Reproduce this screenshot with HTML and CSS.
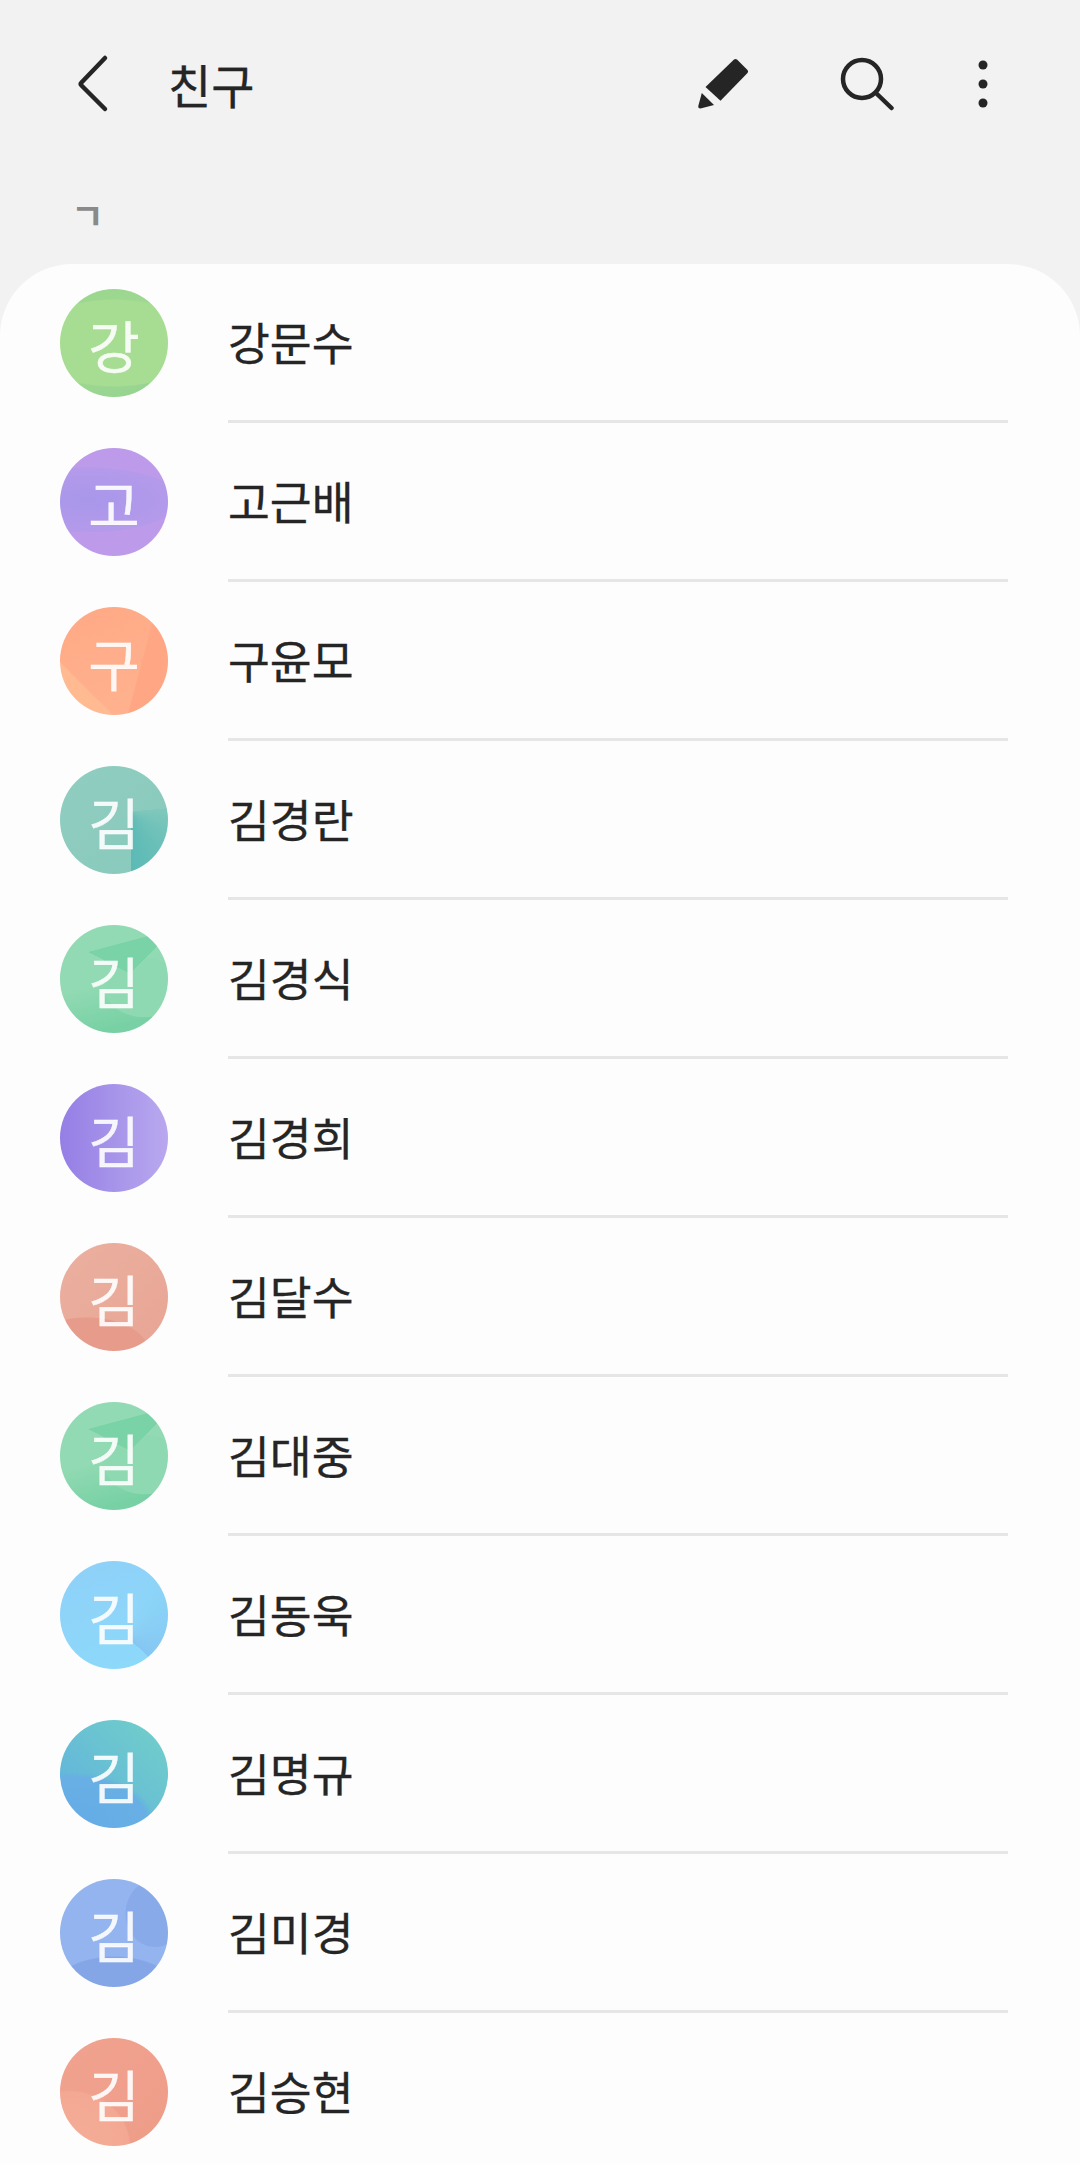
FILE: index.html
```html
<!DOCTYPE html>
<html lang="ko">
<head>
  <meta charset="UTF-8">
  <meta name="viewport" content="width=device-width, initial-scale=1.0">
  <title>친구</title>
  <link rel="stylesheet" href="styles.css">
</head>
<body>
  <header class="app-bar">
    <svg class="icon icon-back" width="36" height="60" viewBox="0 0 36 60">
      <path d="M30 4 L6.500 28.500 Q5 30 6.500 31.500 L30 55" />
    </svg>
    <h1 class="title">친구</h1>
    <svg class="icon icon-edit" width="56" height="56" viewBox="0 0 56 56">
      <path class="solid" d="M38 3.500 Q39.500 2.500 41 3.500 L51.500 14 Q52.800 15.500 51.500 17 L24.500 44.800 L9.500 31 Z" />
      <path class="solid" d="M5.800 37 L18 49 L4.500 52.500 Q2 52.500 2.300 50 Z" />
    </svg>
    <svg class="icon icon-search" width="56" height="56" viewBox="0 0 56 56">
      <circle cx="24" cy="23" r="19" />
      <path d="M39 38 L53.500 52" />
    </svg>
    <svg class="icon icon-more" width="18" height="56" viewBox="0 0 18 56">
      <circle class="solid" cx="9" cy="9" r="4.500" />
      <circle class="solid" cx="9" cy="28" r="4.500" />
      <circle class="solid" cx="9" cy="47" r="4.500" />
    </svg>
  </header>

  <div class="section-label">ㄱ</div>

  <ul class="friend-list">
    <li class="friend"><span class="avatar av-green">강</span><div class="friend-name">강문수</div></li>
    <li class="friend"><span class="avatar av-purple">고</span><div class="friend-name">고근배</div></li>
    <li class="friend"><span class="avatar av-orange">구</span><div class="friend-name">구윤모</div></li>
    <li class="friend"><span class="avatar av-teal">김</span><div class="friend-name">김경란</div></li>
    <li class="friend"><span class="avatar av-mint">김</span><div class="friend-name">김경식</div></li>
    <li class="friend"><span class="avatar av-violet">김</span><div class="friend-name">김경희</div></li>
    <li class="friend"><span class="avatar av-salmon">김</span><div class="friend-name">김달수</div></li>
    <li class="friend"><span class="avatar av-mint">김</span><div class="friend-name">김대중</div></li>
    <li class="friend"><span class="avatar av-sky">김</span><div class="friend-name">김동욱</div></li>
    <li class="friend"><span class="avatar av-azure">김</span><div class="friend-name">김명규</div></li>
    <li class="friend"><span class="avatar av-periwinkle">김</span><div class="friend-name">김미경</div></li>
    <li class="friend"><span class="avatar av-coral">김</span><div class="friend-name">김승현</div></li>
  </ul>
</body>
</html>
```

FILE: styles.css
```css
html, body {
  height: 100%;
}

body {
  margin: 0;
  height: 2164px;
  overflow: hidden;
  background: #f2f2f2;
  color: #252525;
  font-family: "Noto Sans CJK KR", "Noto Sans", sans-serif;
}

/* top bar */
.app-bar {
  display: flex;
  align-items: center;
  height: 168px;
  padding-left: 75px;
}

.title {
  margin: 0 0 0 57px;
  flex-grow: 1;
  font-size: 47px;
  font-weight: 400;
  line-height: 60px;
  -webkit-text-stroke: 0.3px #252525;
}

.icon {
  flex-shrink: 0;
  fill: none;
  stroke: #252525;
  stroke-width: 4.5;
  stroke-linecap: round;
  stroke-linejoin: round;
}

.icon .solid {
  fill: #252525;
  stroke: none;
}

.icon-edit {
  margin-right: 86px;
}

.icon-search {
  margin-right: 80px;
}

.icon-more {
  margin-right: 88px;
}

/* index letter */
.section-label {
  height: 96px;
  padding-left: 71px;
  color: #8a8a8a;
  font-size: 36px;
  font-weight: 700;
  line-height: 92px;
}

/* list */
.friend-list {
  margin: 0;
  padding: 0;
  list-style: none;
  background: #fdfdfd;
  border-radius: 72px 72px 0 0;
}

.friend {
  display: flex;
  align-items: flex-start;
  padding: 0 72px 0 60px;
}

.friend-name {
  flex-grow: 1;
  height: 156px;
  margin-left: 60px;
  border-bottom: 3px solid #e6e6e6;
  font-size: 45.500px;
  line-height: 154px;
  -webkit-text-stroke: 0.3px #252525;
}

.avatar {
  flex-shrink: 0;
  width: 108px;
  height: 108px;
  margin-top: 25px;
  border-radius: 50%;
  color: rgba(255, 255, 255, 0.9);
  font-size: 56px;
  line-height: 110px;
  text-align: center;
  -webkit-text-stroke: 0.4px rgba(255, 255, 255, 0.9);
}

/* avatar colours, each with a few soft facets */
.av-green {
  background:
    radial-gradient(ellipse 90px 44px at 50% 50%, #a7dd92 97%, transparent 100%),
    linear-gradient(160deg, #99d690, #a3da90 50%, #92d391);
}

.av-purple {
  background:
    radial-gradient(ellipse 115px 40px at 25% 48%, #a897ea, #b59aea 80%, transparent 82%),
    #bd9aea;
}

.av-orange {
  background:
    linear-gradient(45deg, #ffba92 24%, transparent 25%),
    linear-gradient(105deg, transparent 70%, #ffa684 71%),
    linear-gradient(160deg, #ffa986, #ffb28f);
}

.av-teal {
  background:
    conic-gradient(from 85deg at 66% 42%, #80c8bc 0, #5cbab6 95deg, transparent 95.500deg),
    linear-gradient(135deg, #90cdc0, #88cabc);
}

.av-mint {
  background:
    linear-gradient(165deg, #92dab3 25%, transparent 25.500%),
    conic-gradient(from 297deg at 65% 45%, #7ad3a6 0 108deg, transparent 108deg),
    radial-gradient(ellipse 40px 30px at 78% 58%, #8ed9b1 97%, transparent 100%),
    linear-gradient(165deg, #92dab3 50%, #78d1a4 85%);
}

.av-violet {
  background: linear-gradient(90deg, #957ee5, #a896ea 55%, #b9a8ef);
}

.av-salmon {
  background:
    radial-gradient(ellipse 62px 34px at 25% 100%, #e69b8b 97%, transparent 100%),
    linear-gradient(135deg, #ebb0a0, #e8a594);
}

.av-sky {
  background:
    conic-gradient(from 20deg at 62% 70%, #8dd5f8 0, #84c6f2 113deg, transparent 113.500deg),
    linear-gradient(160deg, #8fd0f8, #8cdafa);
}

.av-azure {
  background:
    radial-gradient(ellipse 84px 56px at 12% 100%, #65ace7, #67afe4 90%, transparent 100%),
    linear-gradient(45deg, #5fb0df, #72d0c8);
}

.av-periwinkle {
  background:
    radial-gradient(ellipse 30px 34px at 88% 32%, #89aae8 97%, transparent 100%),
    radial-gradient(ellipse 70px 44px at 50% 112%, #85a6e6 97%, transparent 100%),
    #93b4ef;
}

.av-coral {
  background:
    radial-gradient(ellipse 62px 56px at 8% 100%, #f5ae98, #f3a893 97%, transparent 100%),
    linear-gradient(135deg, #f1a390, #ee9c88);
}
```
